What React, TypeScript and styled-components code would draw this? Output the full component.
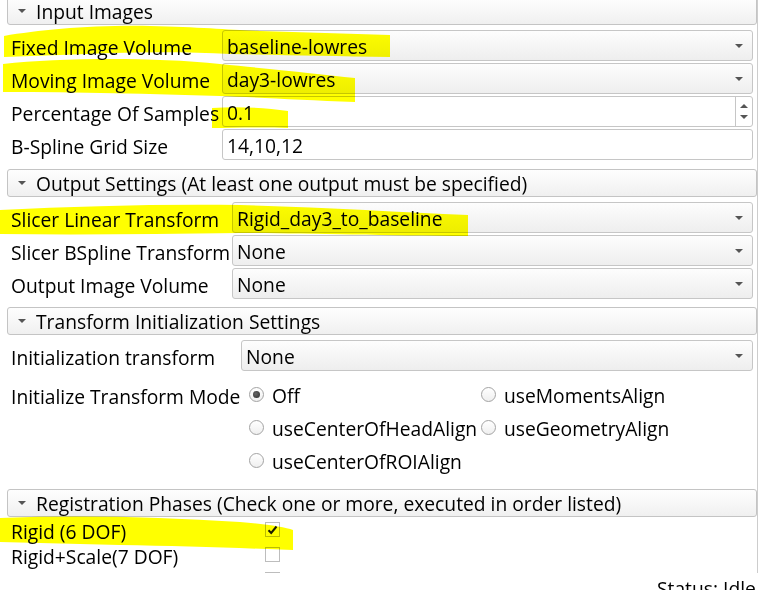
import React from "react";
import styled, { createGlobalStyle } from "styled-components";

const GlobalStyle = createGlobalStyle`
  html, body { margin: 0; padding: 0; background: #ffffff; }
  body {
    font-family: "Open Sans", "Noto Sans", "DejaVu Sans", sans-serif;
    font-size: 19.25px;
    color: #000;
  }
  #root { width: 760px; height: 590px; overflow: hidden; }
`;

const Window = styled.div`
  position: relative;
  width: 760px;
  height: 590px;
  overflow: hidden;
  display: flex;
  flex-direction: column;
`;

const ScrollArea = styled.div`
  flex: none;
  width: 758px;
  height: 573px;
  box-sizing: border-box;
  border-right: 1px solid #cdcdcd;
  overflow: hidden;
`;

const Content = styled.div`
  margin-top: -3px;
  padding-left: 7px;
  display: flex;
  flex-direction: column;
`;

const Header = styled.div`
  height: 28px;
  box-sizing: border-box;
  border: 1px solid #c4c4c4;
  border-radius: 3px;
  background: linear-gradient(#fefefe, #f0f0f0);
  display: flex;
  align-items: center;
  gap: 10px;
  padding: 1px 0 0 10px;
  white-space: nowrap;
  overflow: hidden;
`;

const Caret = styled.span`
  width: 0;
  height: 0;
  margin-top: -1px;
  border-left: 4px solid transparent;
  border-right: 4px solid transparent;
  border-top: 4px solid #555;
`;

const Form = styled.div<{ $labelWidth: number; $pt: number; $pb: number; $gap?: number }>`
  display: grid;
  grid-template-columns: ${(p) => p.$labelWidth}px 1fr;
  row-gap: ${(p) => p.$gap ?? 2}px;
  padding: ${(p) => p.$pt}px 4px ${(p) => p.$pb}px 4px;
  align-items: center;
`;

const Label = styled.div<{ $offset?: number; $h?: number }>`
  white-space: nowrap;
  line-height: ${(p) => p.$h ?? 31}px;
  height: ${(p) => p.$h ?? 31}px;
  box-sizing: border-box;
  padding-top: 2px;
  margin-top: ${(p) => p.$offset ?? 0}px;
  align-self: start;
`;

const Field = styled.div`
  height: 31px;
  box-sizing: border-box;
  border: 1px solid #c6c6c6;
  border-radius: 3px;
  display: flex;
  align-items: center;
  overflow: hidden;
  white-space: nowrap;
`;

const Combo = styled(Field)`
  background: linear-gradient(#fdfdfd, #eeeeee);
  padding: 0 9px 0 4px;
`;

const FieldText = styled.span`
  flex: 1;
  padding-top: 2px;
`;

const ArrowDown = styled.span`
  width: 0;
  height: 0;
  border-left: 4px solid transparent;
  border-right: 4px solid transparent;
  border-top: 4px solid #555;
`;

const ArrowUp = styled.span`
  width: 0;
  height: 0;
  border-left: 4px solid transparent;
  border-right: 4px solid transparent;
  border-bottom: 4px solid #555;
`;

const LineEdit = styled(Field)`
  background: #fff;
  padding-left: 4px;
`;

const SpinBox = styled(Field)`
  background: #fff;
  padding-left: 4px;
`;

const SpinButtons = styled.div`
  align-self: stretch;
  width: 16px;
  border-left: 1px solid #c6c6c6;
  display: flex;
  flex-direction: column;
  align-items: center;
  justify-content: center;
  gap: 7px;
`;

const RadioGrid = styled.div`
  display: grid;
  grid-template-columns: 232px auto;
  grid-auto-rows: 33px;
  padding-left: 8px;
  margin-top: 5px;
  align-self: start;
`;

const RadioItem = styled.div`
  display: flex;
  align-items: center;
  gap: 8px;
  white-space: nowrap;
  & > span:last-child {
    padding-top: 2px;
  }
`;

const RadioCircle = styled.span<{ $on?: boolean }>`
  width: 15px;
  height: 15px;
  box-sizing: border-box;
  border-radius: 50%;
  border: 1px solid #a3a3a3;
  background: linear-gradient(#ffffff, #efefef);
  display: flex;
  align-items: center;
  justify-content: center;
  &::after {
    content: "";
    display: ${(p) => (p.$on ? "block" : "none")};
    width: 7px;
    height: 7px;
    border-radius: 50%;
    background: radial-gradient(circle at 40% 40%, #666, #2a2a2a);
  }
`;

const CheckRow = styled.div`
  height: 25px;
  display: flex;
  align-items: center;
`;

const CheckBox = styled.span`
  width: 15px;
  height: 15px;
  box-sizing: border-box;
  border: 1px solid #bdbdbd;
  background: #fff;
  display: flex;
  align-items: center;
  justify-content: center;
`;

const StatusBar = styled.div`
  margin-top: 4px;
  padding-left: 657px;
  line-height: 24px;
  white-space: nowrap;
`;

const Highlights = styled.svg`
  position: absolute;
  left: 0;
  top: 0;
  pointer-events: none;
  mix-blend-mode: multiply;
`;

const Section: React.FC<{ title: string; children: React.ReactNode }> = ({ title, children }) => (
  <section>
    <Header>
      <Caret />
      <span>{title}</span>
    </Header>
    {children}
  </section>
);

const ComboBox: React.FC<{ value: string }> = ({ value }) => (
  <Combo>
    <FieldText>{value}</FieldText>
    <ArrowDown />
  </Combo>
);

const Radio: React.FC<{ label: string; on?: boolean }> = ({ label, on }) => (
  <RadioItem>
    <RadioCircle $on={on} />
    <span>{label}</span>
  </RadioItem>
);

const Check: React.FC<{ on?: boolean }> = ({ on }) => (
  <CheckRow>
    <CheckBox>
      {on && (
        <svg width="11" height="10" viewBox="0 0 11 10">
          <path d="M1.5 5.2 L4.2 8 L9.5 1.5" fill="none" stroke="#1a1a1a" strokeWidth="2" />
        </svg>
      )}
    </CheckBox>
  </CheckRow>
);

const phases: [string, boolean][] = [
  ["Rigid (6 DOF)", true],
  ["Rigid+Scale(7 DOF)", false],
  ["Affine(12 DOF)", false],
  ["BSpline (>27 DOF)", false],
];

export default function App() {
  return (
    <>
      <GlobalStyle />
      <Window>
        <ScrollArea>
          <Content>
            <Section title="Input Images">
              <Form $labelWidth={211} $pt={5} $pb={9}>
                <Label>Fixed Image Volume</Label>
                <ComboBox value="baseline-lowres" />
                <Label>Moving Image Volume</Label>
                <ComboBox value="day3-lowres" />
                <Label>Percentage Of Samples</Label>
                <SpinBox>
                  <FieldText>0.1</FieldText>
                  <SpinButtons>
                    <ArrowUp />
                    <ArrowDown />
                  </SpinButtons>
                </SpinBox>
                <Label>B-Spline Grid Size</Label>
                <LineEdit>
                  <FieldText>14,10,12</FieldText>
                </LineEdit>
              </Form>
            </Section>

            <Section title="Output Settings (At least one output must be specified)">
              <Form $labelWidth={221} $pt={5} $pb={8}>
                <Label>Slicer Linear Transform</Label>
                <ComboBox value="Rigid_day3_to_baseline" />
                <Label>Slicer BSpline Transform</Label>
                <ComboBox value="None" />
                <Label>Output Image Volume</Label>
                <ComboBox value="None" />
              </Form>
            </Section>

            <Section title="Transform Initialization Settings">
              <Form $labelWidth={230} $pt={5} $pb={12}>
                <Label>Initialization transform</Label>
                <ComboBox value="None" />
                <Label $offset={5} $h={33}>Initialize Transform Mode</Label>
                <RadioGrid>
                  <Radio label="Off" on />
                  <Radio label="useMomentsAlign" />
                  <Radio label="useCenterOfHeadAlign" />
                  <Radio label="useGeometryAlign" />
                  <Radio label="useCenterOfROIAlign" />
                </RadioGrid>
              </Form>
            </Section>

            <Section title="Registration Phases (Check one or more, executed in order listed)">
              <Form $labelWidth={254} $pt={0} $pb={0} $gap={0}>
                {phases.map(([label, on]) => (
                  <React.Fragment key={label}>
                    <Label $h={25}>{label}</Label>
                    <Check on={on} />
                  </React.Fragment>
                ))}
              </Form>
            </Section>
          </Content>
        </ScrollArea>
        <StatusBar>Status: Idle</StatusBar>

        <Highlights width="760" height="590" viewBox="0 0 760 590">
          <g fill="#ffff00">
            <path d="M4 36 C40 30 90 25 150 26 C200 27 230 30 260 31 L390 35 L390 57 C330 56 280 55 230 54 C180 51 120 52 60 55 L4 57 Z" />
            <path d="M3 64 C60 58 150 57 220 64 C280 70 320 74 355 78 L355 102 C300 100 250 97 220 96 C150 94 80 92 3 92 Z" />
            <path d="M212 108 C240 106 265 108 288 111 L288 128 C260 127 235 128 212 128 Z" />
            <path d="M0 210 C80 206 160 204 240 205 C320 207 400 212 468 215 L468 236 C380 236 300 233 240 233 C160 234 80 235 0 234 Z" />
            <path d="M0 518 C80 515 160 517 240 522 C265 524 285 527 293 530 L293 550 C240 548 180 546 120 545 C80 544 40 543 0 542 Z" />
          </g>
        </Highlights>
      </Window>
    </>
  );
}
